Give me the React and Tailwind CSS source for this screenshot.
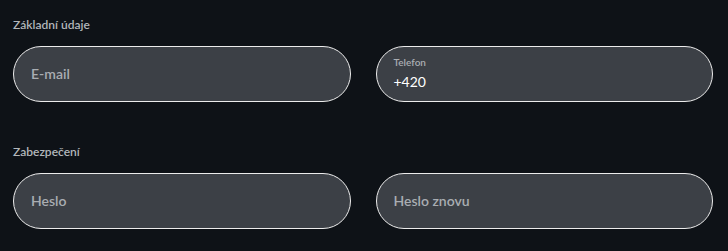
import React from "react";

const font = { fontFamily: "Lato, 'Noto Sans', sans-serif" };

function Field({ placeholder, label, value }) {
  return (
    <div className="h-[56px] rounded-full border border-[#ececec] bg-[#3c4046] px-[17px] flex flex-col justify-center">
      {label ? (
        <>
          <div className="text-[10px] leading-3 font-semibold text-[#a9adb2]">{label}</div>
          <div className="text-[14px] leading-5 text-white mt-[4px]">{value}</div>
        </>
      ) : (
        <div className="text-[14px] leading-5 font-semibold text-[#a9adb2]">{placeholder}</div>
      )}
    </div>
  );
}

function Section({ title, children, className = "" }) {
  return (
    <div className={className}>
      <div className="text-[12px] leading-4 font-semibold text-[#b3b7bb] mb-[13px]">{title}</div>
      <div className="grid grid-cols-2 gap-[25px]">{children}</div>
    </div>
  );
}

export default function App() {
  return (
    <div className="w-[728px] h-[251px] bg-[#0e1217] pl-[13px] pr-[15px] pt-[17px]" style={font}>
      <Section title="Základní údaje">
        <Field placeholder="E-mail" />
        <Field label="Telefon" value="+420" />
      </Section>
      <Section title="Zabezpečení" className="mt-[42px]">
        <Field placeholder="Heslo" />
        <Field placeholder="Heslo znovu" />
      </Section>
    </div>
  );
}
